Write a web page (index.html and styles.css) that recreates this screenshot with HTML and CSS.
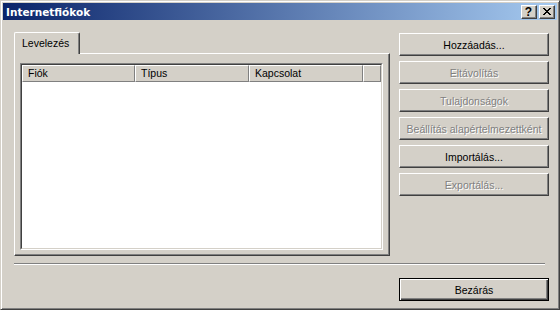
FILE: index.html
```html
<!DOCTYPE html>
<html lang="hu">
<head>
  <meta charset="UTF-8" />
  <title>Internetfiókok</title>
  <link rel="stylesheet" href="styles.css">
</head>
<body>
  <div class="window">
    <div class="titlebar">
      <span class="title">Internetfiókok</span>
      <div class="caption-btns">
        <button class="cap-btn help">?</button>
        <button class="cap-btn close">
          <svg width="8" height="7" viewBox="0 0 8 7">
            <path d="M0 0h2v1h-2zM6 0h2v1h-2zM1 1h2v1h-2zM5 1h2v1h-2zM2 2h4v1h-4zM3 3h2v1h-2zM2 4h4v1h-4zM1 5h2v1h-2zM5 5h2v1h-2zM0 6h2v1h-2zM6 6h2v1h-2z" fill="#000"/>
          </svg>
        </button>
      </div>
    </div>

    <div class="content">
      <div class="main">
        <div class="tabs">
          <div class="tab">Levelezés</div>
          <div class="panel">
            <div class="list">
              <div class="list-inner">
                <div class="list-header">
                  <div class="col col-1">Fiók</div>
                  <div class="col">Típus</div>
                  <div class="col">Kapcsolat</div>
                  <div class="col col-fill"></div>
                </div>
              </div>
            </div>
          </div>
        </div>

        <div class="side-btns">
          <button class="btn">Hozzáadás...</button>
          <button class="btn" disabled>Eltávolítás</button>
          <button class="btn" disabled>Tulajdonságok</button>
          <button class="btn" disabled>Beállítás alapértelmezettként</button>
          <button class="btn">Importálás...</button>
          <button class="btn" disabled>Exportálás...</button>
        </div>
      </div>

      <div class="separator"></div>

      <div class="footer">
        <button class="btn default">Bezárás</button>
      </div>
    </div>
  </div>
</body>
</html>
```

FILE: styles.css
```css
* {
  box-sizing: border-box;
}
body {
  margin: 0;
  background: #d4d0c8;
  font-family: 'Liberation Sans', Arial, sans-serif;
  font-size: 10.5px;
  color: #000;
}

/* Window frame */
.window {
  width: 560px;
  height: 310px;
  background: #d4d0c8;
  border: 1px solid;
  border-color: #d4d0c8 #404040 #404040 #d4d0c8;
  box-shadow: inset 1px 1px #fff, inset -1px -1px #808080;
  padding: 2px;
  display: flex;
  flex-direction: column;
}

.titlebar {
  height: 18px;
  background: linear-gradient(90deg, #0a246a, #a6caf0);
  display: flex;
  align-items: center;
  justify-content: space-between;
  padding: 0 2px 0 3px;
}
.title {
  color: #fff;
  font-family: 'DejaVu Sans', sans-serif;
  font-weight: bold;
  font-size: 10.5px;
}
.caption-btns {
  display: flex;
  gap: 2px;
}
.cap-btn {
  width: 16px;
  height: 14px;
  padding: 0;
  margin: 0;
  background: #d4d0c8;
  border: 1px solid;
  border-color: #fff #404040 #404040 #fff;
  box-shadow: inset -1px -1px #808080;
  display: flex;
  align-items: center;
  justify-content: center;
}
.cap-btn.help {
  font-family: 'Liberation Sans', sans-serif;
  font-weight: bold;
  font-size: 12px;
  line-height: 12px;
  color: #000;
  padding-right: 1px;
}
.cap-btn.close svg {
  display: block;
  margin-right: 1px;
}

/* Dialog body */
.content {
  flex: 1;
  display: flex;
  flex-direction: column;
  padding: 12px 8px 6px 11px;
}
.main {
  height: 224px;
  display: grid;
  grid-template-columns: 376px 150px;
  column-gap: 9px;
}

.tabs {
  display: flex;
  flex-direction: column;
}
.tab {
  align-self: flex-start;
  width: 66px;
  height: 22px;
  margin-bottom: -1px;
  position: relative;
  z-index: 1;
  background: #d4d0c8;
  border: 1px solid;
  border-bottom: none;
  border-color: #fff #404040 #d4d0c8 #fff;
  border-radius: 2px 2px 0 0;
  box-shadow: inset -1px 0 #808080;
  padding: 4px 0 0 7px;
}
.panel {
  flex: 1;
  border: 1px solid;
  border-color: #fff #404040 #404040 #fff;
  box-shadow: inset -1px -1px #808080;
  padding: 9px 6px 5px 5px;
  display: flex;
}

.list {
  flex: 1;
  border: 1px solid;
  border-color: #808080 #fff #fff #808080;
  display: flex;
}
.list-inner {
  flex: 1;
  border: 1px solid;
  border-color: #404040 #d4d0c8 #d4d0c8 #404040;
  background: #fff;
}
.list-header {
  display: flex;
  height: 17px;
}
.col {
  width: 114px;
  background: #d4d0c8;
  border: 1px solid;
  border-color: #fff #808080 #808080 #fff;
  padding: 1px 0 0 5px;
  white-space: nowrap;
}
.col-1 {
  width: 113px;
}
.col-fill {
  flex: 1;
  width: auto;
}

/* Buttons */
.side-btns {
  display: flex;
  flex-direction: column;
  gap: 5px;
  padding-top: 1px;
}
.btn {
  width: 150px;
  height: 23px;
  margin: 0;
  padding: 0;
  background: #d4d0c8;
  border: 1px solid;
  border-color: #fff #404040 #404040 #fff;
  box-shadow: inset -1px -1px #808080;
  font-family: 'Liberation Sans', Arial, sans-serif;
  font-size: 10.5px;
  color: #000;
  text-align: center;
  white-space: nowrap;
}
.btn:disabled {
  color: #808080;
  text-shadow: 1px 1px #fff;
}
.btn.default {
  border-color: #000;
  box-shadow: inset 1px 1px #fff, inset -1px -1px #404040, inset -2px -2px #808080;
}

.separator {
  margin: 7px 4px 0 0;
  height: 2px;
  border-top: 1px solid #808080;
  border-bottom: 1px solid #fff;
}
.footer {
  margin-top: 13px;
  display: flex;
  justify-content: flex-end;
}
```
